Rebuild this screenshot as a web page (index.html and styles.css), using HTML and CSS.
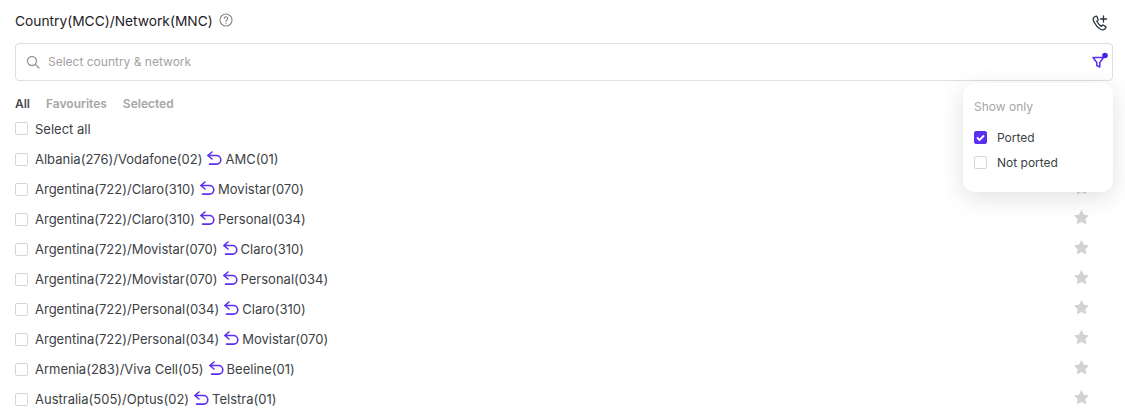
FILE: index.html
```html
<!DOCTYPE html>
<html lang="en">
<head>
  <meta charset="UTF-8" />
  <title>Country/Network</title>
  <link rel="stylesheet" href="styles.css">
</head>
<body>
  <svg class="defs" width="0" height="0" aria-hidden="true">
    <symbol id="star" viewBox="0 0 16 16">
      <path d="M8 .8l2.200 4.600 5 .7-3.600 3.500.9 5L8 12.200l-4.500 2.400.9-5L.8 6.100l5-.7z" fill="#d2d2d2" stroke="#d2d2d2" stroke-linejoin="round"/>
    </symbol>
    <symbol id="ported" viewBox="0 0 16 15">
      <path d="M6 1L1.800 4.500 6 8M2 4.500h8.500a4.300 4.300 0 0 1 0 8.600H3.500" fill="none" stroke="#5b30f0" stroke-width="1.600" stroke-linecap="round" stroke-linejoin="round"/>
    </symbol>
  </svg>

  <div class="panel">
    <div class="head">
      <div class="title">
        Country(MCC)/Network(MNC)
        <svg class="help" width="14" height="14" viewBox="0 0 14 14" fill="none" stroke="#8c8c8c" stroke-width="1.200" stroke-linecap="round">
          <circle cx="7" cy="7" r="6"/>
          <path d="M5.300 5.500a1.700 1.700 0 1 1 2.600 1.400c-.6.400-.9.700-.9 1.300"/>
          <path d="M7 10.200v.1"/>
        </svg>
      </div>
      <svg class="call" width="16" height="16" viewBox="0 0 16 16" fill="none" stroke-linecap="round" stroke-linejoin="round" stroke-width="1.300">
        <path d="M3.700 1.200L2 2.300C.9 3.200 1 5 2 7c1.300 2.700 3.700 5.600 6.500 7.200 1.700.9 3.300.8 4.300-.1l1-1.200c.3-.5.2-1-.2-1.300l-2-1.400c-.5-.3-1-.2-1.300.2l-.7.9c-1.900-.9-3.700-2.800-4.800-5l.9-.8c.4-.3.5-.8.3-1.300L4.900 1.500c-.3-.5-.8-.6-1.200-.3z" stroke="#26323f"/>
        <path d="M11.500 1v6M8.500 4h6" stroke="#26323f"/>
      </svg>
    </div>

    <div class="search">
      <svg width="14" height="14" viewBox="0 0 14 14" fill="none" stroke="#9a9a9a" stroke-width="1.400" stroke-linecap="round">
        <circle cx="6" cy="6" r="4.500"/>
        <path d="M9.500 9.500L13 13"/>
      </svg>
      <span class="placeholder">Select country &amp; network</span>
      <svg class="filter" width="16" height="16" viewBox="0 0 16 16" fill="none">
        <path d="M2 3.500h10.500L8.800 8.500V13l-3-1.500v-3z" stroke="#5b30f0" stroke-width="1.500" stroke-linejoin="round"/>
        <circle cx="14" cy="1.500" r="2.800" fill="#4a1fe0"/>
      </svg>
    </div>

    <div class="tabs">
      <span class="tab active">All</span>
      <span class="tab">Favourites</span>
      <span class="tab">Selected</span>
    </div>

    <div class="select-all"><span class="box"></span>Select all</div>

    <ul class="list">
      <li><span class="box"></span>Albania(276)/Vodafone(02)<svg class="swap"><use href="#ported"/></svg>AMC(01)<svg class="star"><use href="#star"/></svg></li>
      <li><span class="box"></span>Argentina(722)/Claro(310)<svg class="swap"><use href="#ported"/></svg>Movistar(070)<svg class="star"><use href="#star"/></svg></li>
      <li><span class="box"></span>Argentina(722)/Claro(310)<svg class="swap"><use href="#ported"/></svg>Personal(034)<svg class="star"><use href="#star"/></svg></li>
      <li><span class="box"></span>Argentina(722)/Movistar(070)<svg class="swap"><use href="#ported"/></svg>Claro(310)<svg class="star"><use href="#star"/></svg></li>
      <li><span class="box"></span>Argentina(722)/Movistar(070)<svg class="swap"><use href="#ported"/></svg>Personal(034)<svg class="star"><use href="#star"/></svg></li>
      <li><span class="box"></span>Argentina(722)/Personal(034)<svg class="swap"><use href="#ported"/></svg>Claro(310)<svg class="star"><use href="#star"/></svg></li>
      <li><span class="box"></span>Argentina(722)/Personal(034)<svg class="swap"><use href="#ported"/></svg>Movistar(070)<svg class="star"><use href="#star"/></svg></li>
      <li><span class="box"></span>Armenia(283)/Viva Cell(05)<svg class="swap"><use href="#ported"/></svg>Beeline(01)<svg class="star"><use href="#star"/></svg></li>
      <li><span class="box"></span>Australia(505)/Optus(02)<svg class="swap"><use href="#ported"/></svg>Telstra(01)<svg class="star"><use href="#star"/></svg></li>
    </ul>

    <div class="popup">
      <div class="popup-title">Show only</div>
      <div class="option">
        <span class="box checked">
          <svg width="9" height="8" viewBox="0 0 9 8" fill="none" stroke="#fff" stroke-width="1.800" stroke-linecap="round" stroke-linejoin="round"><path d="M1.500 4l2 2 4-4"/></svg>
        </span>Ported
      </div>
      <div class="option"><span class="box"></span>Not ported</div>
    </div>
  </div>
</body>
</html>
```
FILE: styles.css
```css
html, body {
  margin: 0;
  height: 410px;
  overflow: hidden;
  background: white;
}

body {
  font-family: Inter, 'Liberation Sans', sans-serif;
  font-size: 13px;
  color: #3c3f45;
}

.defs {
  display: block;
  height: 0;
}

.panel {
  position: relative;
  padding: 12px 12px 0 15px;
}

.head {
  display: flex;
  align-items: center;
  justify-content: space-between;
  height: 18px;
  padding-right: 5px;
}

.title {
  display: flex;
  align-items: center;
  gap: 6px;
  font-size: 13.750px;
  font-weight: 400;
  color: #1f2126;
}

.help {
  margin-top: -2px;
}

.call {
  margin-top: 4px;
}

.search {
  display: flex;
  align-items: center;
  gap: 8px;
  height: 36px;
  margin-top: 13px;
  padding: 0 5px 0 10px;
  border: 1px solid #dfdfdf;
  border-radius: 4px;
}

.placeholder {
  flex: 1;
  padding-bottom: 2px;
  color: #a3a3a3;
  font-size: 12px;
}

.filter {
  overflow: visible;
}

.tabs {
  display: flex;
  gap: 16px;
  margin-top: 15px;
  font-size: 12px;
  font-weight: 600;
  color: #a6a6a6;
}

.tab.active {
  color: #4a4c50;
}

.select-all {
  display: flex;
  align-items: center;
  margin-top: 10px;
  height: 15px;
}

.box {
  flex: none;
  display: flex;
  align-items: center;
  justify-content: center;
  width: 11px;
  height: 11px;
  margin-right: 7px;
  border: 1px solid #d6d6d6;
  border-radius: 2px;
}

.list {
  list-style: none;
  margin: 0;
  padding: 0;
  margin-top: 8px;
}

.list li {
  display: flex;
  align-items: center;
  height: 30px;
  padding-right: 24px;
}

.swap {
  width: 16px;
  height: 15px;
  margin: -2px 3px 0 4px;
}

.star {
  width: 15px;
  height: 15px;
  margin-left: auto;
  margin-top: -3px;
}

.popup {
  position: absolute;
  top: 83px;
  left: 963px;
  width: 150px;
  height: 109px;
  background: white;
  border-radius: 12px;
  box-shadow: 0 6px 24px rgba(0, 0, 0, 0.12);
}

.popup-title {
  padding: 16px 0 0 11px;
  font-size: 12px;
  color: #a6a6a6;
}

.option {
  display: flex;
  align-items: center;
  height: 25px;
  padding-left: 11px;
  font-size: 12px;
}

.popup-title + .option {
  margin-top: 11px;
}

.option .box {
  margin-right: 10px;
}

.box.checked {
  background: #5b2ff0;
  border-color: #5b2ff0;
}
```
